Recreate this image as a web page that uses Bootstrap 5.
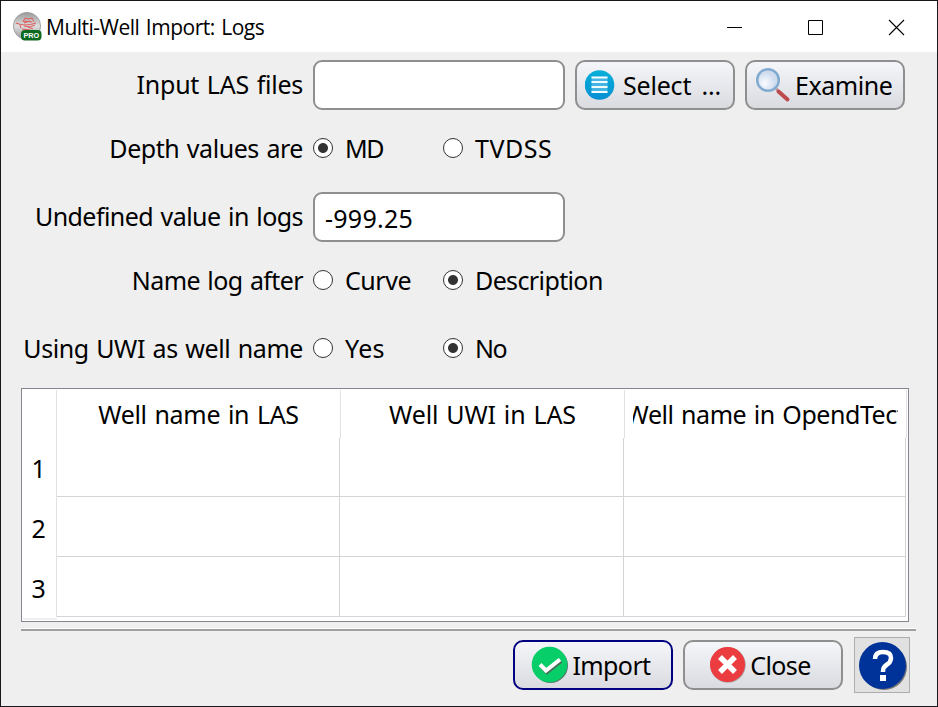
<!DOCTYPE html>
<html lang="en">
<head>
<meta charset="utf-8">
<title>Multi-Well Import: Logs</title>
<link href="https://cdn.jsdelivr.net/npm/bootstrap@5.3.0/dist/css/bootstrap.min.css" rel="stylesheet">
<style>
body{font:25px/36px "Noto Sans",sans-serif;color:#000;letter-spacing:-.45px;word-spacing:1.5px}
.window{width:938px;height:707px;background:#efefef;border:1px solid #17171a}
.titlebar{height:51px;padding-left:12px;font-size:21px;font-family:"Open Sans","Noto Sans",sans-serif;letter-spacing:-.5px}
.caption-btn{width:81px}
.form-line{padding-left:12px}
.line-label{width:290px;white-space:nowrap}
.edit-line .line-label{padding-bottom:2px}
.tall{height:76px}.edit-line{height:50px}.after-gap{margin-top:6px}.last{height:60px;margin-bottom:10px}
.w-input{letter-spacing:-.25px}.w-using{letter-spacing:-.43px}.w-undef{letter-spacing:-.55px}.w-name{letter-spacing:-.6px}
.w-tv{letter-spacing:.5px}.w-md{letter-spacing:-1.5px}.w-num{letter-spacing:.25px!important}.w-import{letter-spacing:-.6px}.w-yes{letter-spacing:.3px}.w-desc{letter-spacing:-.62px}
.field{width:252px;height:50px;margin-left:10px;border:2px solid #8f8f8f;border-radius:9px;background:#fff;padding:1px 10px 0;font:inherit;letter-spacing:inherit;color:#000}
.tool{width:160px;height:50px;margin-left:10px;padding:0;border:2px solid #8f8f8f;border-radius:10px;background:linear-gradient(#f5f6fa,#dadbe0);font:inherit;letter-spacing:inherit;color:#000;white-space:nowrap}
.tool.primary{border-color:#000080;padding-right:4px}
.tool.closer{padding-right:6px}
.select-text{letter-spacing:-.2px;word-spacing:4px}
.choice{width:130px;white-space:nowrap}
.line-label + .choice{margin-left:10px}
.choice input{appearance:none;flex:none;width:20px;height:20px;margin:0 12px 0 0;border:1px solid #333;border-radius:50%;background:#fff}
.choice input:checked{background:radial-gradient(circle,#333 4.5px,#fff 5.4px)}
.grid-frame{width:888px;height:234px;margin-left:20px;border:1px solid #828790;background:#fff;padding:1px;letter-spacing:-.3px}
.side{width:34px;border-right:1px solid #e2e2e2}
.head-row{height:48px}
.head-cell{width:284px;border-right:1px solid #e2e2e2;padding:0 8px;white-space:nowrap}
.head-cell:last-child{width:282px}
.clip{width:267px;overflow:hidden;display:flex;justify-content:center}
.clip.uwi{letter-spacing:-.1px}
.clip.long{letter-spacing:-.45px;word-spacing:1.5px}
.data-row{height:60px}
.data-row:first-child{height:59px}
.data-row .side{padding:1px 2px 0 0}
.data-cell{width:284px;border-right:1px solid #d4d4d4;border-bottom:1px solid #d4d4d4}
.data-cell:nth-child(2){width:283px}
.data-cell:last-child{width:282px}
.side-end{width:34px;height:2px;margin-top:1px;background:#f0f0f0}
.rule{width:895px;margin:6px 0 0 20px;height:3px;background:#a0a0a0;border-top:1px solid #fff}
.footer-line{height:56px;margin-top:6px;padding-right:27px}
.gap-icon{margin-left:3px}
.help{width:56px;height:56px;margin-left:11px;padding:0;border:1px solid #adadad;background:#e1e1e1}
</style>
<script src="https://cdn.jsdelivr.net/npm/bootstrap@5.3.0/dist/js/bootstrap.bundle.min.js"></script>
</head>
<body class="overflow-hidden">
<svg width="0" height="0" class="position-absolute"><defs>
<linearGradient id="silver" x2="0" y2="1"><stop stop-color="#999"/><stop offset=".5" stop-color="#ddd"/><stop offset="1" stop-color="#999"/></linearGradient>
<linearGradient id="blue" x2="0" y2="1"><stop stop-color="#07b0d8"/><stop offset="1" stop-color="#078fd4"/></linearGradient>
<radialGradient id="lens" cx=".35" cy=".65"><stop stop-color="#fafbff"/><stop offset="1" stop-color="#cfdcee"/></radialGradient>
</defs></svg>
<main class="window d-flex flex-column">
<header class="titlebar bg-white d-flex align-items-center">
<svg width="29" height="29" viewBox="0 0 29 29"><circle cx="14" cy="14" r="13.6" fill="url(#silver)" stroke="#929797" stroke-width=".8"/><path d="M10 10l2-4 3 1 4-1 2 4M3 11q9 4 20 0M7 13l1 3M11 14l6 1 5-2M15 15l5 2M9 17l8 1M11 11l6-2M10 9l9 1" fill="none" stroke="#e0595c" stroke-width="1"/><rect x="8" y="18" width="20.500" height="10.500" rx="4" fill="#0c6a20"/><text x="18.300" y="26" text-anchor="middle" font-family="Liberation Sans" font-weight="bold" font-size="7.300" letter-spacing="0" fill="#fff">PRO</text></svg>
<span class="ms-1">Multi-Well Import: Logs</span>
<div class="ms-auto d-flex">
<svg class="caption-btn" height="18"><path d="M33 9.500h15" stroke="#000" shape-rendering="crispEdges"/></svg>
<svg class="caption-btn" height="18"><path d="M33.500 2.500h14v14h-14z" fill="none" stroke="#000"/></svg>
<svg class="caption-btn" height="18"><path d="M33 2l15 15M48 2L33 17" stroke="#000" stroke-width="1.100"/></svg>
</div>
</header>
<form class="pt-2">
<div class="form-line edit-line d-flex align-items-center"><label class="line-label text-end w-input">Input LAS files</label><input class="field"><button type="button" class="tool d-flex align-items-center"><svg class="ms-2" width="30" height="32" viewBox="0 0 30 32"><circle cx="14.500" cy="16" r="14.800" fill="url(#blue)"/><path d="M6.500 7.500h16v16h-16z" fill="#45b6e3"/><path d="M6.500 8.500h16M6.500 13h16M6.500 18h16M6.500 23h16" stroke="#f2fbfe" stroke-width="2"/></svg><span class="ms-2 select-text">Select ...</span></button><button type="button" class="tool d-flex align-items-center"><svg class="ms-2" width="36" height="36" viewBox="0 0 36 36"><circle cx="13" cy="13" r="10.800" fill="url(#lens)" stroke="#82abd0" stroke-width="2.500"/><path d="M21 21.500l3 3" stroke="#b9a0a5" stroke-width="3"/><path d="M23.500 24.500l9 8" stroke="#bd4a4c" stroke-width="4" stroke-linecap="round"/></svg><span class="ms-1">Examine</span></button></div>
<div class="form-line tall d-flex align-items-center"><span class="line-label text-end">Depth values are</span><label class="choice d-flex align-items-center w-md"><input type="radio" name="d" checked>MD</label><label class="choice d-flex align-items-center w-tv"><input type="radio" name="d">TVDSS</label></div>
<div class="form-line edit-line after-gap d-flex align-items-center"><label class="line-label text-end w-undef">Undefined value in logs</label><input class="field w-num" value="-999.25"></div>
<div class="form-line tall d-flex align-items-center"><span class="line-label text-end w-name">Name log after</span><label class="choice d-flex align-items-center"><input type="radio" name="n">Curve</label><label class="choice d-flex align-items-center w-desc"><input type="radio" name="n" checked>Description</label></div>
<div class="form-line last d-flex align-items-center"><span class="line-label text-end w-using">Using UWI as well name</span><label class="choice d-flex align-items-center w-yes"><input type="radio" name="u">Yes</label><label class="choice d-flex align-items-center w-md"><input type="radio" name="u" checked>No</label></div>
</form>
<section class="grid-frame">
<div class="head-row d-flex align-items-stretch"><div class="side"></div><div class="head-cell d-flex align-items-center"><div class="clip">Well name in LAS</div></div><div class="head-cell d-flex align-items-center"><div class="clip uwi">Well UWI in LAS</div></div><div class="head-cell d-flex align-items-center"><div class="clip long">Well name in OpendTect</div></div></div>
<div>
<div class="data-row d-flex"><div class="side d-flex align-items-center justify-content-center">1</div><div class="data-cell"></div><div class="data-cell"></div><div class="data-cell"></div></div>
<div class="data-row d-flex"><div class="side d-flex align-items-center justify-content-center">2</div><div class="data-cell"></div><div class="data-cell"></div><div class="data-cell"></div></div>
<div class="data-row d-flex"><div class="side d-flex align-items-center justify-content-center">3</div><div class="data-cell"></div><div class="data-cell"></div><div class="data-cell"></div></div>
</div>
<div class="side-end"></div>
</section>
<div class="rule"></div>
<footer class="footer-line d-flex align-items-center justify-content-end">
<button class="tool primary d-flex align-items-center justify-content-center"><svg width="38" height="38" viewBox="0 0 38 38"><circle cx="19.500" cy="19.500" r="17.500" fill="#58766a"/><circle cx="18.500" cy="18.500" r="17.800" fill="#07ce68"/><path d="M10 20l6 6 14-11" fill="none" stroke="#486b58" stroke-width="4"/><path d="M9 18.500l6 6 14-11" fill="none" stroke="#fff" stroke-width="4"/></svg><span class="gap-icon w-import">Import</span></button>
<button class="tool closer d-flex align-items-center justify-content-center"><svg width="38" height="38" viewBox="0 0 38 38"><circle cx="19" cy="19" r="17.800" fill="#aaa"/><circle cx="18.500" cy="18.500" r="17.500" fill="#eb3c3f"/><path d="M11 11l15 15M26 11L11 26" stroke="#fff" stroke-width="5.500"/></svg><span class="gap-icon w-import">Close</span></button>
<button class="help"><svg class="d-block" width="54" height="54" viewBox="0 0 54 54"><circle cx="29" cy="29" r="23" fill="#777"/><circle cx="27.500" cy="27.500" r="23.500" fill="#003399"/><path d="M20 21q0-7 8-7 8 0 8 6 0 4-4 6.500t-4 6.500v1" fill="none" stroke="#fff" stroke-width="4.500"/><path d="M25 37h6v6h-6z" fill="#fff"/></svg></button>
</footer>
</main>
</body>
</html>
